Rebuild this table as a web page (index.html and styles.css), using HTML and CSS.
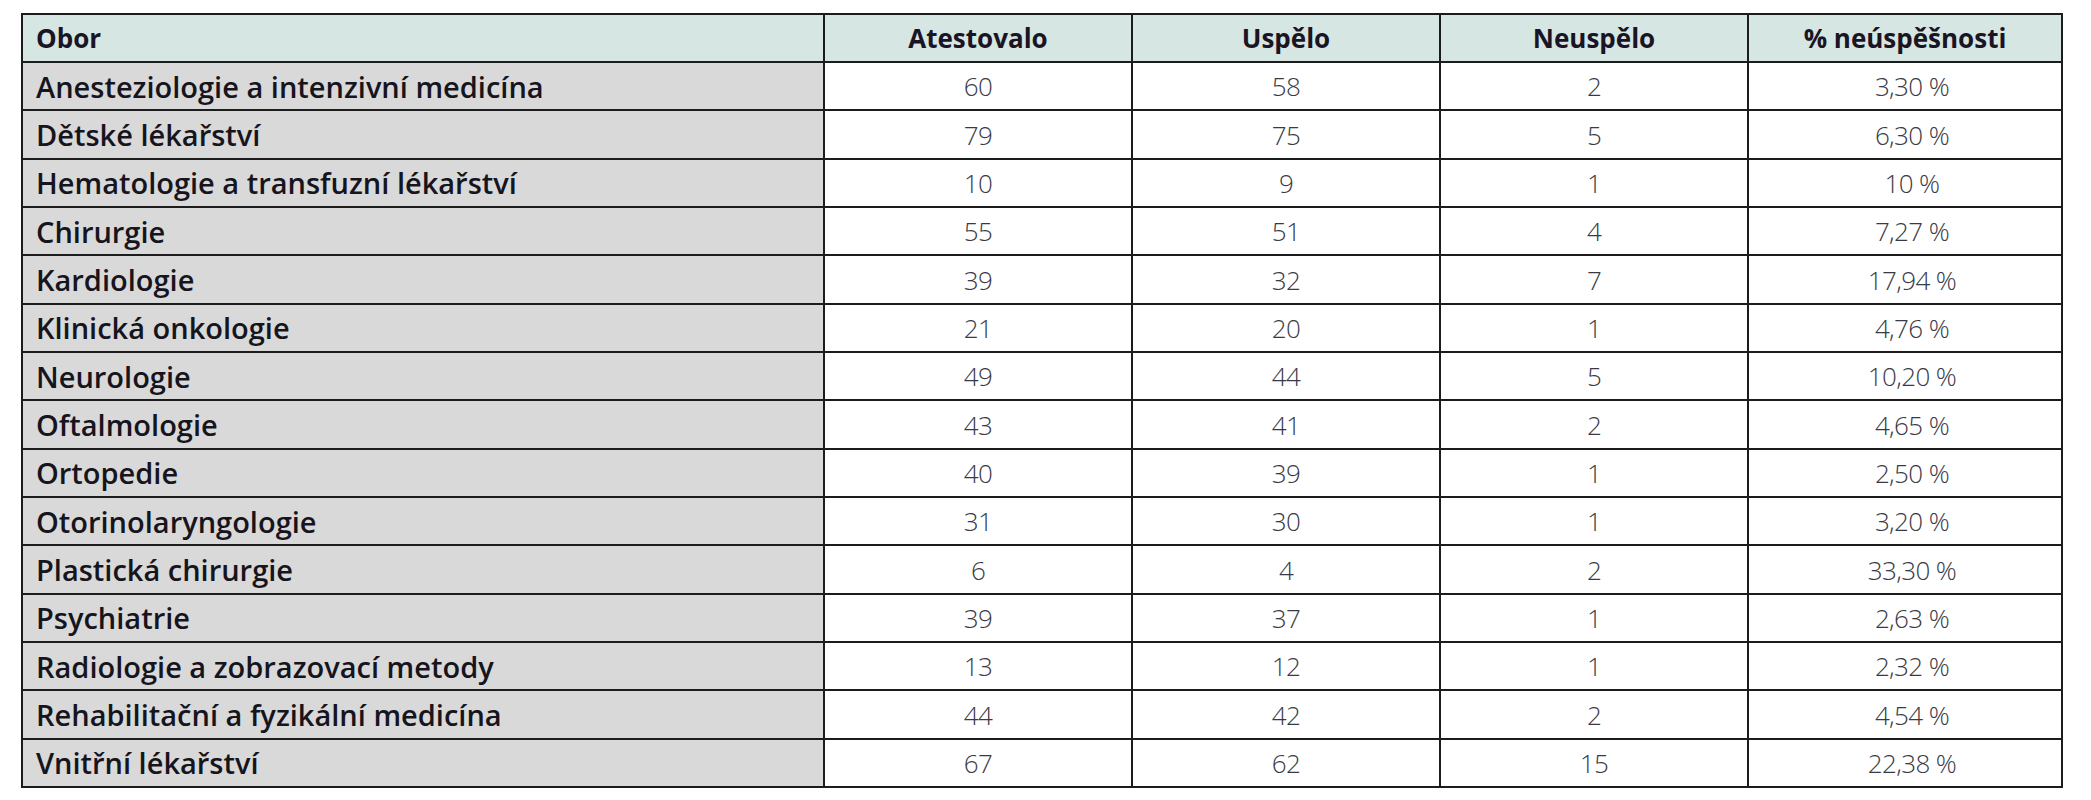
FILE: index.html
```html
<!DOCTYPE html>
<html lang="cs">
<head>
<meta charset="utf-8">
<title>Atestace</title>
<link rel="stylesheet" href="styles.css">
</head>
<body>
<table class="stats">
  <colgroup>
    <col class="c-obor">
    <col class="c-num">
    <col class="c-num">
    <col class="c-num">
    <col class="c-last">
  </colgroup>
  <thead>
    <tr><th class="obor">Obor</th><th>Atestovalo</th><th>Uspělo</th><th>Neuspělo</th><th>% neúspěšnosti</th></tr>
  </thead>
  <tbody>
    <tr><td class="obor">Anesteziologie a intenzivní medicína</td><td>60</td><td>58</td><td>2</td><td class="pct">3,30 %</td></tr>
    <tr><td class="obor">Dětské lékařství</td><td>79</td><td>75</td><td>5</td><td class="pct">6,30 %</td></tr>
    <tr><td class="obor">Hematologie a transfuzní lékařství</td><td>10</td><td>9</td><td>1</td><td class="pct">10 %</td></tr>
    <tr><td class="obor">Chirurgie</td><td>55</td><td>51</td><td>4</td><td class="pct">7,27 %</td></tr>
    <tr><td class="obor">Kardiologie</td><td>39</td><td>32</td><td>7</td><td class="pct">17,94 %</td></tr>
    <tr><td class="obor">Klinická onkologie</td><td>21</td><td>20</td><td>1</td><td class="pct">4,76 %</td></tr>
    <tr><td class="obor">Neurologie</td><td>49</td><td>44</td><td>5</td><td class="pct">10,20 %</td></tr>
    <tr><td class="obor">Oftalmologie</td><td>43</td><td>41</td><td>2</td><td class="pct">4,65 %</td></tr>
    <tr><td class="obor">Ortopedie</td><td>40</td><td>39</td><td>1</td><td class="pct">2,50 %</td></tr>
    <tr><td class="obor">Otorinolaryngologie</td><td>31</td><td>30</td><td>1</td><td class="pct">3,20 %</td></tr>
    <tr><td class="obor">Plastická chirurgie</td><td>6</td><td>4</td><td>2</td><td class="pct">33,30 %</td></tr>
    <tr><td class="obor">Psychiatrie</td><td>39</td><td>37</td><td>1</td><td class="pct">2,63 %</td></tr>
    <tr><td class="obor">Radiologie a zobrazovací metody</td><td>13</td><td>12</td><td>1</td><td class="pct">2,32 %</td></tr>
    <tr><td class="obor">Rehabilitační a fyzikální medicína</td><td>44</td><td>42</td><td>2</td><td class="pct">4,54 %</td></tr>
    <tr><td class="obor">Vnitřní lékařství</td><td>67</td><td>62</td><td>15</td><td class="pct">22,38 %</td></tr>
  </tbody>
</table>
</body>
</html>
```
FILE: styles.css
```css
html, body {
  margin: 0;
  background: #ffffff;
}
body {
  padding: 13px 0 0 21px;
  font-family: "Open Sans", "Noto Sans", sans-serif;
}
.stats {
  border-collapse: collapse;
  table-layout: fixed;
  width: 2040px;
  border: 2px solid #1c1c1c;
}
.c-obor { width: 802px; }
.c-num { width: 308px; }
.c-last { width: 314px; }
.stats th,
.stats td {
  border: 2px solid #1c1c1c;
  padding: 0;
  text-align: center;
  vertical-align: middle;
  line-height: 1;
}
.stats thead tr { height: 48px; }
.stats tbody tr { height: 48.35px; }
.stats th {
  background: #d6e6e2;
  color: #1a1424;
  font-weight: 700;
  font-size: 26px;
  letter-spacing: 0;
}
.stats td {
  background: #ffffff;
  color: #3a3a46;
  font-weight: 300;
  font-size: 26px;
  letter-spacing: -0.6px;
}
.stats td.pct {
  padding-left: 14px;
}
.stats .obor {
  text-align: left;
  padding-left: 13px;
}
.stats td.obor {
  background: #d9d9d9;
  color: #16141c;
  font-weight: 600;
  font-size: 29px;
  letter-spacing: 0;
}
```
